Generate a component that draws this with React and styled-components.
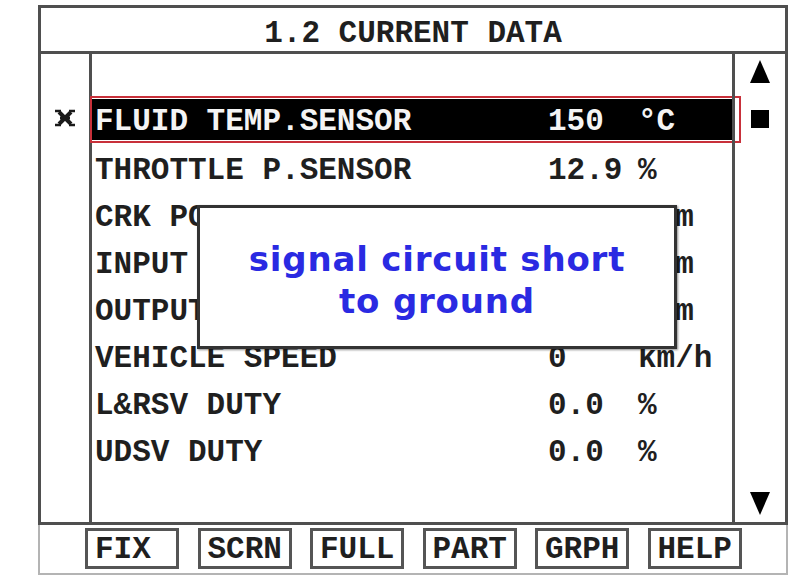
import styled, { createGlobalStyle } from 'styled-components';

const GlobalStyle = createGlobalStyle`
  html, body {
    margin: 0;
    background: #fff;
  }
  * {
    box-sizing: border-box;
  }
`;

const LINE = '#4f4f4f';
const MONO = `"Liberation Mono", "DejaVu Sans Mono", monospace`;

const Screen = styled.div`
  position: relative;
  width: 750px;
  margin: 5px 0 0 38px;
  font-family: ${MONO};
  font-weight: bold;
  font-size: 31px;
  color: #1f1f1f;
`;

const Title = styled.div`
  height: 49px;
  border: 3px solid ${LINE};
  padding-top: 9px;
  line-height: 34px;
  text-align: center;
  white-space: pre;
`;

const Body = styled.div`
  display: flex;
  height: 471px;
  border: 3px solid ${LINE};
  border-top: none;
`;

const LeftCol = styled.div`
  width: 51px;
  border-right: 3px solid ${LINE};
  padding-top: 40px;
`;

const MarkerCell = styled.div`
  height: 47px;
  display: flex;
  align-items: center;
  justify-content: center;
`;

const List = styled.div`
  flex: 1;
  padding-top: 44px;
`;

const Highlight = styled.div`
  margin: -2px -9px 2px -2px;
  border: 2px solid #c8303a;
  padding: 1px 7px 1px 0;
`;

const Row = styled.div`
  display: grid;
  grid-template-columns: 453px 90px 1fr;
  align-items: center;
  height: ${(p) => (p.$active ? '41px' : '47px')};
  padding: 4px 0 0 3px;
  background: ${(p) => (p.$active ? '#000' : 'transparent')};
  color: ${(p) => (p.$active ? '#f4f4f4' : 'inherit')};
  white-space: pre;
`;

const ScrollCol = styled.div`
  width: 53px;
  border-left: 3px solid ${LINE};
  display: flex;
  flex-direction: column;
  align-items: center;
  padding: 6px 0 7px;
`;

const Thumb = styled.div`
  width: 18px;
  height: 18px;
  margin-top: 27px;
  background: #000;
`;

const Down = styled.svg`
  margin-top: auto;
`;

const Popup = styled.div`
  position: absolute;
  left: 159px;
  top: 200px;
  width: 480px;
  height: 144px;
  background: #fff;
  border: 3px solid #333;
  box-shadow: 1px 1px 2px rgba(0, 0, 0, 0.45);
  display: flex;
  flex-direction: column;
  align-items: center;
  justify-content: center;
  padding-top: 5px;
  font-family: "DejaVu Sans", "Liberation Sans", sans-serif;
  font-weight: bold;
  font-size: 34px;
  letter-spacing: 0.8px;
  line-height: 42px;
  color: #2a2ae2;
`;

const Footer = styled.div`
  display: flex;
  gap: 18.5px;
  height: 50px;
  padding: 3px 0 0 45px;
  border: 2px solid #b4b4b4;
  border-top: none;
`;

const Key = styled.div`
  width: 94px;
  height: 41px;
  border: 3px solid #555;
  padding: 1px 0 0 7px;
  line-height: 35px;
`;

const rows = [
  { name: 'FLUID TEMP.SENSOR', value: '150', unit: '°C', active: true },
  { name: 'THROTTLE P.SENSOR', value: '12.9', unit: '%' },
  { name: 'CRK POS.SENSOR', value: '0', unit: 'rpm' },
  { name: 'INPUT SPEED', value: '0', unit: 'rpm' },
  { name: 'OUTPUT SPEED', value: '0', unit: 'rpm' },
  { name: 'VEHICLE SPEED', value: '0', unit: 'km/h' },
  { name: 'L&RSV DUTY', value: '0.0', unit: '%' },
  { name: 'UDSV DUTY', value: '0.0', unit: '%' },
];

const keys = ['FIX', 'SCRN', 'FULL', 'PART', 'GRPH', 'HELP'];

const Marker = () => (
  <svg width="22" height="20" viewBox="0 0 22 20">
    <g stroke="#1a1a1a" fill="none">
      <path d="M5 4 L17 16 M17 4 L5 16" strokeWidth="4" />
      <path d="M1 3 H7 M15 3 H21 M1 17 H7 M15 17 H21" strokeWidth="2.4" />
      <path d="M6 10 H16" strokeWidth="3" />
    </g>
  </svg>
);

const DataRow = ({ row }) => {
  const inner = (
    <Row $active={row.active}>
      <span>{row.name}</span>
      <span>{row.value}</span>
      <span>{row.unit}</span>
    </Row>
  );
  return row.active ? <Highlight>{inner}</Highlight> : inner;
};

export default function App() {
  return (
    <>
      <GlobalStyle />
      <Screen>
        <Title>1.2 CURRENT DATA</Title>
        <Body>
          <LeftCol>
            <MarkerCell>
              <Marker />
            </MarkerCell>
          </LeftCol>
          <List>
            {rows.map((r) => (
              <DataRow key={r.name} row={r} />
            ))}
          </List>
          <ScrollCol>
            <svg width="20" height="23" viewBox="0 0 20 23">
              <path d="M10 0 L20 23 H0 Z" fill="#000" />
            </svg>
            <Thumb />
            <Down width="20" height="23" viewBox="0 0 20 23">
              <path d="M0 0 H20 L10 23 Z" fill="#000" />
            </Down>
          </ScrollCol>
        </Body>
        <Footer>
          {keys.map((k) => (
            <Key key={k}>{k}</Key>
          ))}
        </Footer>
        <Popup>
          <div>signal circuit short</div>
          <div>to ground</div>
        </Popup>
      </Screen>
    </>
  );
}
